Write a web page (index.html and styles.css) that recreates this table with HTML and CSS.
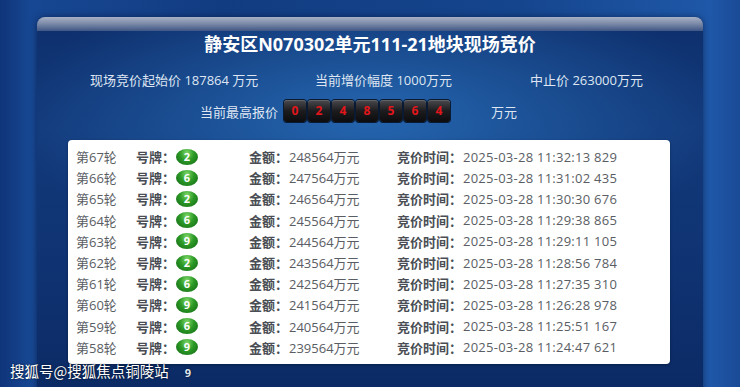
FILE: index.html
```html
<!DOCTYPE html>
<html lang="zh-CN">
<head>
<meta charset="utf-8">
<title>现场竞价</title>
<link rel="stylesheet" href="styles.css">
</head>
<body>
<div class="screen">
  <div class="panel">
    <div class="panel-bar"></div>
    <h1 class="title">静安区N070302单元111-21地块现场竞价</h1>
    <div class="info">
      <span>现场竞价起始价 187864 万元</span>
      <span>当前增价幅度 1000万元</span>
      <span>中止价 263000万元</span>
    </div>
    <div class="highest">
      <span class="hl-label">当前最高报价</span>
      <div class="digits">
        <span class="digit">0</span><span class="digit">2</span><span class="digit">4</span><span class="digit">8</span><span class="digit">5</span><span class="digit">6</span><span class="digit">4</span>
      </div>
      <span class="hl-unit">万元</span>
    </div>
    <div class="table">
      <div class="row"><span>第67轮</span><b>号牌：</b><span class="badge">2</span><b>金额：</b><span>248564万元</span><b>竞价时间：</b><span>2025-03-28 11:32:13 829</span></div>
      <div class="row"><span>第66轮</span><b>号牌：</b><span class="badge">6</span><b>金额：</b><span>247564万元</span><b>竞价时间：</b><span>2025-03-28 11:31:02 435</span></div>
      <div class="row"><span>第65轮</span><b>号牌：</b><span class="badge">2</span><b>金额：</b><span>246564万元</span><b>竞价时间：</b><span>2025-03-28 11:30:30 676</span></div>
      <div class="row"><span>第64轮</span><b>号牌：</b><span class="badge">6</span><b>金额：</b><span>245564万元</span><b>竞价时间：</b><span>2025-03-28 11:29:38 865</span></div>
      <div class="row"><span>第63轮</span><b>号牌：</b><span class="badge">9</span><b>金额：</b><span>244564万元</span><b>竞价时间：</b><span>2025-03-28 11:29:11 105</span></div>
      <div class="row"><span>第62轮</span><b>号牌：</b><span class="badge">2</span><b>金额：</b><span>243564万元</span><b>竞价时间：</b><span>2025-03-28 11:28:56 784</span></div>
      <div class="row"><span>第61轮</span><b>号牌：</b><span class="badge">6</span><b>金额：</b><span>242564万元</span><b>竞价时间：</b><span>2025-03-28 11:27:35 310</span></div>
      <div class="row"><span>第60轮</span><b>号牌：</b><span class="badge">9</span><b>金额：</b><span>241564万元</span><b>竞价时间：</b><span>2025-03-28 11:26:28 978</span></div>
      <div class="row"><span>第59轮</span><b>号牌：</b><span class="badge">6</span><b>金额：</b><span>240564万元</span><b>竞价时间：</b><span>2025-03-28 11:25:51 167</span></div>
      <div class="row"><span>第58轮</span><b>号牌：</b><span class="badge">9</span><b>金额：</b><span>239564万元</span><b>竞价时间：</b><span>2025-03-28 11:24:47 621</span></div>
    </div>
  </div>
  <div class="watermark">搜狐号@搜狐焦点铜陵站<span class="page">9</span></div>
</div>
</body>
</html>
```

FILE: styles.css
```css
* { box-sizing: border-box; margin: 0; padding: 0; }
html, body { width: 740px; height: 387px; overflow: hidden; }
body {
  font-family: "Open Sans", "Noto Sans CJK SC", sans-serif;
  background: linear-gradient(90deg, #0f3479 0%, #174792 4%, #123c82 30%, #15458d 70%, #1f58a8 96%, #1a4a96 100%);
}
.screen {
  position: relative;
  width: 740px;
  height: 387px;
  padding: 17px 37px 0 37px;
  overflow: hidden;
}
.panel {
  width: 666px;
  height: 380px;
  border-radius: 8px 8px 0 0;
  background:
    radial-gradient(ellipse 360px 140px at 50% 100px, rgba(40, 110, 185, 0.85), rgba(40, 110, 185, 0) 100%),
    linear-gradient(180deg, #0e2f6c 0%, #12397a 30%, #103474 60%, #0b2a64 100%);
  box-shadow: 0 0 6px rgba(0, 10, 40, 0.5);
}
.panel-bar {
  height: 14px;
  border-radius: 8px 8px 0 0;
  background: linear-gradient(180deg, #a7b1c6 0%, #7f8daa 45%, #3f5685 100%);
}
.title {
  margin-top: 1px;
  height: 24px;
  line-height: 24px;
  text-align: center;
  color: #ffffff;
  font-size: 18px;
  font-weight: 700;
}
.info {
  margin-top: 15px;
  display: grid;
  grid-template-columns: 225px 215px auto;
  padding-left: 53px;
  height: 18px;
  line-height: 18px;
  font-size: 13px;
  color: #dfe6f2;
}
.highest {
  margin-top: 11px;
  display: flex;
  align-items: center;
  height: 22px;
  padding-left: 163px;
  font-size: 13px;
  color: #dfe6f2;
}
.hl-label { width: 84px; }
.digits { display: flex; gap: 2px; }
.digit {
  width: 22px;
  height: 22px;
  border-radius: 3px;
  background: linear-gradient(180deg, #4a4a4e 0%, #1c1c1f 50%, #0c0c0e 100%);
  box-shadow: 0 0 0 1px #0a1a33, inset 0 1px 0 rgba(255,255,255,0.15);
  color: #e0161a;
  font-weight: 700;
  font-size: 12px;
  line-height: 22px;
  text-align: center;
}
.hl-unit { margin-left: 41px; }
.table {
  margin: 18px 0 0 31px;
  width: 602px;
  height: 224px;
  background: #ffffff;
  border-radius: 4px;
  padding: 6px 0 6px 8px;
  box-shadow: 0 1px 3px rgba(0,0,0,0.3);
}
.row {
  display: grid;
  grid-template-columns: 60px 40px 73px 40px 108px 66px auto;
  align-items: center;
  height: 21.2px;
  font-size: 13px;
  color: #5a5e64;
}
.row b { font-weight: 700; color: #4a4e54; }
.row span:last-child { letter-spacing: 0.25px; }
.badge {
  width: 22px;
  height: 16px;
  border-radius: 50%;
  background: radial-gradient(ellipse at 50% 25%, #7fd86a 0%, #2c9a26 45%, #0f6512 100%);
  color: #ffffff;
  font-weight: 700;
  font-size: 11px;
  line-height: 16px;
  text-align: center;
}
.watermark {
  position: absolute;
  left: 10px;
  top: 362px;
  font-size: 14.5px;
  line-height: 18px;
  color: #ffffff;
  font-family: "Noto Sans CJK SC", sans-serif;
  text-shadow: 0 0 2px rgba(0,0,0,0.8);
}
.page {
  margin-left: 16px;
  font-size: 11px;
  font-weight: 700;
  color: #dfe6f2;
  font-family: "Open Sans", sans-serif;
}
```
